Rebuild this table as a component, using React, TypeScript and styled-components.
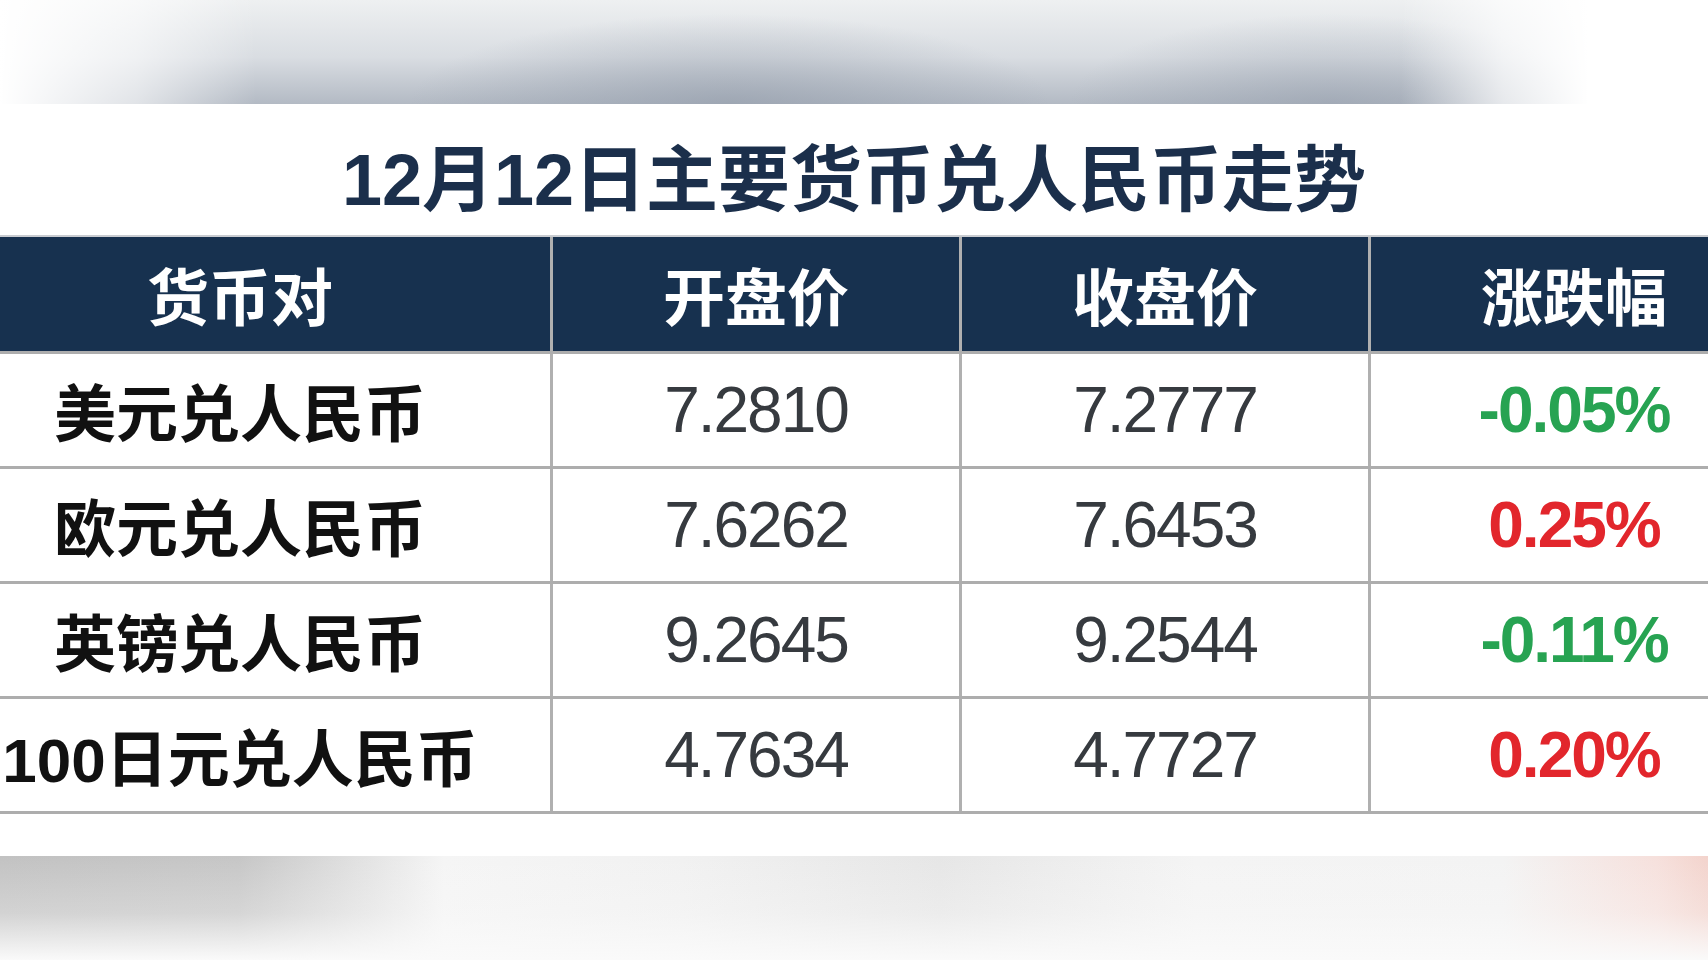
import * as React from 'react'
import styled, { createGlobalStyle } from 'styled-components'

const GlobalStyle = createGlobalStyle`
	html, body {
		margin: 0;
		padding: 0;
		background: #ffffff;
		overflow: hidden;
	}
	#root {
		width: 1708px;
		height: 960px;
	}
`

type Rate = {
	pair: string
	open: string
	close: string
	change: string
	up: boolean
}

const RATES: Rate[] = [
	{ pair: '美元兑人民币', open: '7.2810', close: '7.2777', change: '-0.05%', up: false },
	{ pair: '欧元兑人民币', open: '7.6262', close: '7.6453', change: '0.25%', up: true },
	{ pair: '英镑兑人民币', open: '9.2645', close: '9.2544', change: '-0.11%', up: false },
	{ pair: '100日元兑人民币', open: '4.7634', close: '4.7727', change: '0.20%', up: true }
]

const CJK = `"Liberation Sans", "Noto Sans CJK SC", sans-serif`

const Page = styled.div`
	width: 1708px;
	height: 960px;
	display: flex;
	flex-direction: column;
	overflow: hidden;
`

const TopBand = styled.div`
	height: 104px;
	flex: none;
	background:
		linear-gradient(to right, #ffffff 0%, rgba(255, 255, 255, 0.6) 8%, rgba(255, 255, 255, 0) 15%, rgba(255, 255, 255, 0) 82%, rgba(255, 255, 255, 0.7) 88%, #ffffff 93%),
		radial-gradient(ellipse 320px 90px at 730px 104px, rgba(140, 150, 165, 0.55), rgba(140, 150, 165, 0)),
		radial-gradient(ellipse 260px 90px at 1330px 104px, rgba(140, 150, 165, 0.45), rgba(140, 150, 165, 0)),
		linear-gradient(to bottom, #eef0f1 0%, #d9dde2 55%, #b3bac4 100%);
`

const Panel = styled.div`
	flex: 1;
	background: #ffffff;
	display: flex;
	flex-direction: column;
`

const Title = styled.h1`
	margin: 0;
	height: 131px;
	padding-top: 40px;
	box-sizing: border-box;
	text-align: center;
	font-family: ${CJK};
	font-weight: 700;
	font-size: 72px;
	line-height: 72px;
	color: #1b2f4b;
	white-space: nowrap;
`

const Table = styled.div`
	margin-left: -70px;
	width: 1847px;
	border-top: 2px solid #c9ccd1;
`

const Row = styled.div<{ $head?: boolean }>`
	display: grid;
	grid-template-columns: 620px 409px 409px 409px;
	height: ${(p) => (p.$head ? 117 : 115)}px;
	box-sizing: border-box;
	border-bottom: 3px solid #adadad;
	background: ${(p) => (p.$head ? '#17314f' : '#ffffff')};
`

const Cell = styled.div<{ $head?: boolean }>`
	display: flex;
	align-items: center;
	justify-content: center;
	white-space: nowrap;
	& + & {
		border-left: 3px solid ${(p) => (p.$head ? '#8593a6' : '#b0b0b0')};
	}
`

const HeadText = styled.span`
	font-family: ${CJK};
	font-weight: 700;
	font-size: 62px;
	color: #ffffff;
`

const PairText = styled.span`
	font-family: ${CJK};
	font-weight: 700;
	font-size: 62px;
	color: #111111;
`

const Price = styled.span`
	font-family: "Liberation Sans", sans-serif;
	font-size: 64px;
	letter-spacing: -2px;
	color: #363a3f;
`

const Change = styled.span<{ $up: boolean }>`
	font-family: "Liberation Sans", sans-serif;
	font-weight: 700;
	font-size: 64px;
	letter-spacing: -2px;
	color: ${(p) => (p.$up ? '#e2262c' : '#27a352')};
`

const BottomBand = styled.div`
	height: 104px;
	flex: none;
	background:
		linear-gradient(to bottom, rgba(250, 250, 250, 0) 0%, rgba(250, 250, 250, 0.3) 55%, #fafafa 100%),
		linear-gradient(to right, #c2c2c2 0%, #c6c6c6 14%, #d9d9d9 19%, #f5f5f5 26%, #f1f1f1 40%, #e6e6e6 55%, #f4f4f4 70%, #f3f3f3 88%, #f6e0dc 97%, #f3d3cc 100%);
`

export default function App() {
	return (
		<>
			<GlobalStyle />
			<Page>
				<TopBand />
				<Panel>
					<Title>12月12日主要货币兑人民币走势</Title>
					<Table>
						<Row $head>
							<Cell $head><HeadText>货币对</HeadText></Cell>
							<Cell $head><HeadText>开盘价</HeadText></Cell>
							<Cell $head><HeadText>收盘价</HeadText></Cell>
							<Cell $head><HeadText>涨跌幅</HeadText></Cell>
						</Row>
						{RATES.map((r) => (
							<Row key={r.pair}>
								<Cell><PairText>{r.pair}</PairText></Cell>
								<Cell><Price>{r.open}</Price></Cell>
								<Cell><Price>{r.close}</Price></Cell>
								<Cell><Change $up={r.up}>{r.change}</Change></Cell>
							</Row>
						))}
					</Table>
				</Panel>
				<BottomBand />
			</Page>
		</>
	)
}
